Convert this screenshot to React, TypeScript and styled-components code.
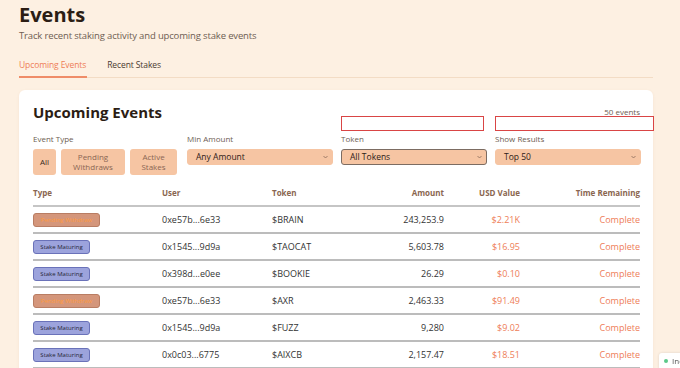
import React, { useState } from 'react'
import styled, { createGlobalStyle } from 'styled-components'

const peach = '#f6c5a3'
const orange = '#ee7d57'
const ink = '#2b1d14'
const muted = '#6e5d52'

const GlobalStyle = createGlobalStyle`
  html, body {
    margin: 0;
    padding: 0;
    background: #fdf0e2;
    overflow: hidden;
    font-family: "Open Sans", "Noto Sans", sans-serif;
    color: #333;
  }
`

const Page = styled.div`
  padding: 0 27px 0 19px;
  height: 368px;
  overflow: hidden;
`

const Title = styled.h1`
  margin: 0;
  padding-top: 2px;
  font-size: 20px;
  line-height: 26px;
  font-weight: 700;
  color: ${ink};
`

const Subtitle = styled.p`
  margin: 1px 0 0 0;
  font-size: 9.5px;
  line-height: 14px;
  letter-spacing: -0.15px;
  color: ${muted};
`

const Tabs = styled.div`
  display: flex;
  gap: 20px;
  margin-top: 16px;
  border-bottom: 1px solid #f3dcc5;
`

const Tab = styled.div<{ $active?: boolean }>`
  font-size: 8.5px;
  line-height: 12px;
  letter-spacing: -0.1px;
  padding: 0 1px 5px 0;
  color: ${({ $active }) => ($active ? orange : '#4a3a30')};
  border-bottom: 2px solid ${({ $active }) => ($active ? '#ef8c68' : 'transparent')};
  margin-bottom: -1px;
  cursor: pointer;
`

const Card = styled.div`
  margin-top: 12px;
  background: #fff;
  border-radius: 6px;
  padding: 12px 13px 20px 14px;
  box-shadow: 0 1px 3px rgba(190, 140, 100, 0.12);
`

const CardHeader = styled.div`
  display: flex;
  justify-content: space-between;
  align-items: center;
`

const CardTitle = styled.h2`
  margin: 0;
  font-size: 15px;
  line-height: 20px;
  font-weight: 700;
  color: ${ink};
`

const Count = styled.span`
  font-size: 8px;
  line-height: 10px;
  color: ${muted};
`

const Filters = styled.div`
  display: grid;
  grid-template-columns: repeat(4, 146px);
  column-gap: 8px;
  margin-top: 12px;
`

const FilterGroup = styled.div`
  position: relative;
  display: flex;
  flex-direction: column;
  gap: 5px;
`

const ErrorBox = styled.div<{ $w: number }>`
  position: absolute;
  top: -18px;
  left: 0;
  box-sizing: border-box;
  width: ${({ $w }) => $w}px;
  height: 15px;
  border: 1.5px solid #d94545;
`

const Label = styled.label`
  font-size: 8px;
  line-height: 10px;
  color: ${muted};
`

const ButtonRow = styled.div`
  display: flex;
  gap: 5px;
`

const TypeButton = styled.button<{ $w: number; $active?: boolean }>`
  width: ${({ $w }) => $w}px;
  height: 26px;
  padding: 0 4px;
  border: none;
  border-radius: 3px;
  background: ${peach};
  font-family: inherit;
  font-size: 8px;
  line-height: 10.5px;
  color: ${({ $active }) => ($active ? '#3a2a20' : '#8a6654')};
  cursor: pointer;
`

const SelectBox = styled.button<{ $focus?: boolean }>`
  display: flex;
  align-items: center;
  justify-content: space-between;
  width: 100%;
  height: 16px;
  box-sizing: border-box;
  padding: 0 4px 0 8px;
  border-radius: 3px;
  background: ${peach};
  border: 1px solid ${({ $focus }) => ($focus ? '#7c6c62' : peach)};
  font-family: inherit;
  font-size: 8.5px;
  line-height: 12px;
  color: #2e2018;
  text-align: left;
  cursor: pointer;
`

const Chevron = styled.svg`
  width: 5px;
  height: 4px;
  flex: none;
`

const Table = styled.div`
  margin-top: 12px;
`

const HeadRow = styled.div`
  display: grid;
  grid-template-columns: 129px 110px 98px 74px 76px 120px;
  padding-bottom: 6px;
  line-height: 12px;
  border-bottom: 2px solid #c5c5c5;
  font-size: 8px;
  font-weight: 700;
  color: #8a6650;
`

const Row = styled.div`
  display: grid;
  grid-template-columns: 129px 110px 98px 74px 76px 120px;
  align-items: center;
  height: 25px;
  border-bottom: 2px solid #bcbcbc;
  font-size: 9px;
  color: #333;
`

const Cell = styled.div<{ $right?: boolean; $accent?: boolean }>`
  text-align: ${({ $right }) => ($right ? 'right' : 'left')};
  color: ${({ $accent }) => ($accent ? orange : 'inherit')};
  white-space: nowrap;
`

const Badge = styled.span<{ $kind: 'pending' | 'stake' }>`
  display: inline-block;
  box-sizing: border-box;
  height: 14px;
  line-height: 12px;
  padding: 0 2px;
  border-radius: 3px;
  font-size: 6px;
  border: 1px solid ${({ $kind }) => ($kind === 'pending' ? '#b97d63' : '#6a72b9')};
  background: ${({ $kind }) => ($kind === 'pending' ? '#d4967b' : '#9ca3dc')};
  color: ${({ $kind }) => ($kind === 'pending' ? '#ff9b3d' : '#262638')};
  width: ${({ $kind }) => ($kind === 'pending' ? '67px' : '57px')};
  text-align: center;
`

const Toast = styled.div`
  position: fixed;
  left: 659px;
  top: 353px;
  display: flex;
  align-items: center;
  gap: 4px;
  padding: 2px 8px 4px 5px;
  background: #fff;
  border-radius: 3px;
  box-shadow: 0 0 3px rgba(0, 0, 0, 0.12);
  font-size: 8px;
  color: #555;
`

const Dot = styled.span`
  width: 4px;
  height: 4px;
  border-radius: 50%;
  background: #5cc98a;
`

const events = [
  { type: 'pending', user: '0xe57b...6e33', token: '$BRAIN', amount: '243,253.9', usd: '$2.21K' },
  { type: 'stake', user: '0x1545...9d9a', token: '$TAOCAT', amount: '5,603.78', usd: '$16.95' },
  { type: 'stake', user: '0x398d...e0ee', token: '$BOOKIE', amount: '26.29', usd: '$0.10' },
  { type: 'pending', user: '0xe57b...6e33', token: '$AXR', amount: '2,463.33', usd: '$91.49' },
  { type: 'stake', user: '0x1545...9d9a', token: '$FUZZ', amount: '9,280', usd: '$9.02' },
  { type: 'stake', user: '0x0c03...6775', token: '$AIXCB', amount: '2,157.47', usd: '$18.51' },
] as const

const ChevronIcon = () => (
  <Chevron viewBox="0 0 5 4">
    <path d="M0.5 1 L2.5 3 L4.5 1" fill="none" stroke="#8a6a58" strokeWidth="0.8" />
  </Chevron>
)

const Dropdown = ({ value, focus }: { value: string; focus?: boolean }) => (
  <SelectBox $focus={focus}>
    <span>{value}</span>
    <ChevronIcon />
  </SelectBox>
)

export default function App() {
  const [tab, setTab] = useState('upcoming')
  const [type, setType] = useState('all')

  return (
    <>
      <GlobalStyle />
      <Page>
        <Title>Events</Title>
        <Subtitle>Track recent staking activity and upcoming stake events</Subtitle>
        <Tabs>
          <Tab $active={tab === 'upcoming'} onClick={() => setTab('upcoming')}>Upcoming Events</Tab>
          <Tab $active={tab === 'recent'} onClick={() => setTab('recent')}>Recent Stakes</Tab>
        </Tabs>
        <Card>
          <CardHeader>
            <CardTitle>Upcoming Events</CardTitle>
            <Count>50 events</Count>
          </CardHeader>
          <Filters>
            <FilterGroup>
              <Label>Event Type</Label>
              <ButtonRow>
                <TypeButton $w={23} $active={type === 'all'} onClick={() => setType('all')}>All</TypeButton>
                <TypeButton $w={64} $active={type === 'pending'} onClick={() => setType('pending')}>Pending Withdraws</TypeButton>
                <TypeButton $w={47} $active={type === 'active'} onClick={() => setType('active')}>Active Stakes</TypeButton>
              </ButtonRow>
            </FilterGroup>
            <FilterGroup>
              <Label>Min Amount</Label>
              <Dropdown value="Any Amount" />
            </FilterGroup>
            <FilterGroup>
              <ErrorBox $w={143} />
              <Label>Token</Label>
              <Dropdown value="All Tokens" focus />
            </FilterGroup>
            <FilterGroup>
              <ErrorBox $w={159} />
              <Label>Show Results</Label>
              <Dropdown value="Top 50" />
            </FilterGroup>
          </Filters>
          <Table>
            <HeadRow>
              <Cell>Type</Cell>
              <Cell>User</Cell>
              <Cell>Token</Cell>
              <Cell $right>Amount</Cell>
              <Cell $right>USD Value</Cell>
              <Cell $right>Time Remaining</Cell>
            </HeadRow>
            {events.map((e, i) => (
              <Row key={i}>
                <Cell>
                  <Badge $kind={e.type}>{e.type === 'pending' ? 'Pending Withdraw' : 'Stake Maturing'}</Badge>
                </Cell>
                <Cell>{e.user}</Cell>
                <Cell>{e.token}</Cell>
                <Cell $right>{e.amount}</Cell>
                <Cell $right $accent>{e.usd}</Cell>
                <Cell $right $accent>Complete</Cell>
              </Row>
            ))}
          </Table>
        </Card>
      </Page>
      <Toast>
        <Dot />
        Indexing
      </Toast>
    </>
  )
}
